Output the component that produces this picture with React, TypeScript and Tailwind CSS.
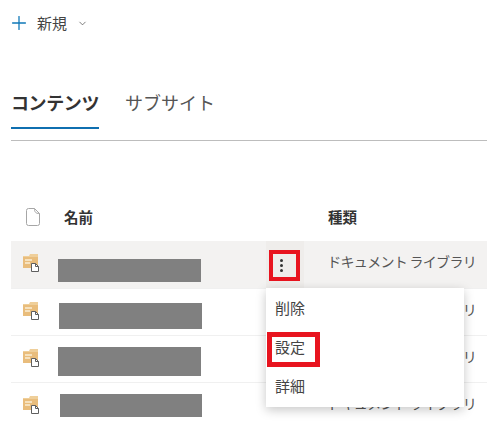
import { ChevronDown, Plus } from 'lucide-react';

const FONT = "font-['Noto_Sans_CJK_JP','Noto_Sans',sans-serif]";

// folder with a small page on top
function LibraryIcon() {
  return (
    <svg width="18" height="19" viewBox="0 0 18 19" className="shrink-0">
      <path d="M1 3h6l1-2h8v12H1z" fill="#efcf9a" />
      <path d="M1 4h15v11H1z" fill="#e9bd7c" />
      <path d="M3 6h7v2H3zM3 9h5v2H3z" fill="#f6e2bf" />
      <path d="M9.500 10.500h4l3 3v5h-7z" fill="#fff" stroke="#5f5f5f" strokeWidth="1" />
      <path d="M13.500 10.500v3h3" fill="none" stroke="#5f5f5f" strokeWidth="1" />
    </svg>
  );
}

function FileHeaderIcon() {
  return (
    <svg width="14" height="18" viewBox="0 0 14 18">
      <path
        d="M2.500.500h6l5 5v10a2 2 0 0 1-2 2h-9a2 2 0 0 1-2-2v-13a2 2 0 0 1 2-2z"
        fill="#fff"
        stroke="#a6a6a6"
      />
      <path d="M8.500.500c0 3.500 1 5 5 5" fill="none" stroke="#a6a6a6" />
    </svg>
  );
}

const rows = [
  { bar: 'ml-0 mt-[18px] h-[23px] w-[143px]' },
  { bar: 'ml-[1px] mt-[14px] h-[26px] w-[143px]' },
  { bar: 'ml-0 mt-[11px] h-[29px] w-[143px]' },
  { bar: 'ml-[2px] mt-[11px] h-[23px] w-[142px]' },
];

export default function App() {
  return (
    <div className={`relative h-[422px] w-[487px] overflow-hidden bg-white text-[#333] ${FONT}`}>
      {/* command bar */}
      <div className="flex h-[47px] items-center pl-[8px] text-[15px]">
        <Plus size={22} strokeWidth={1.4} className="-mt-[2px] text-[#0f78b8]" />
        <span className="ml-[7px] text-[#444]">新規</span>
        <ChevronDown size={11} strokeWidth={1.5} className="ml-[10px] text-[#444]" />
      </div>

      {/* tabs */}
      <div className="ml-[11px] mt-[39px] flex h-[55px] whitespace-nowrap border-b border-[#bdbdbd] text-[18px] leading-[32px]">
        <div className="h-[43px] w-[88px] border-b-[2px] border-[#0f6fb0] font-bold tracking-[-0.4px] text-[#333]">
          コンテンツ
        </div>
        <div className="ml-[26px] text-[#555]">サブサイト</div>
      </div>

      {/* table header */}
      <div className="mt-[55px] flex h-[45px] items-center pb-[3px] text-[14.5px] font-bold">
        <div className="ml-[26px] flex w-[38px]">
          <FileHeaderIcon />
        </div>
        <span className="w-[264px]">名前</span>
        <span>種類</span>
      </div>

      {/* table rows */}
      <div className="ml-[11px]">
        {rows.map((row, idx) => (
          <div
            key={idx}
            className={`flex border-b border-[#f0f0f0] ${idx === 0 ? 'h-[48px] bg-[#f3f2f1]' : 'h-[47px]'}`}
          >
            <div className="ml-[11px] mt-[12px] w-[36px] shrink-0">
              <LibraryIcon />
            </div>
            <div className={`bg-[#808080] ${row.bar}`} />
            <div className="ml-auto mr-[11px] mt-[10px] whitespace-nowrap text-[14px] leading-[20px] tracking-[-0.7px] text-[#555]">
              ドキュメント ライブラリ
            </div>
          </div>
        ))}
      </div>

      {/* more button */}
      <div className="absolute left-[266px] top-[241px] flex h-[48px] w-[38px] flex-col items-start justify-center gap-[2px] bg-[#efedeb] pl-[14px]">
        <span className="h-[3px] w-[3px] rounded-full bg-[#333]" />
        <span className="h-[3px] w-[3px] rounded-full bg-[#333]" />
        <span className="h-[3px] w-[3px] rounded-full bg-[#333]" />
      </div>
      <div className="absolute left-[269px] top-[250px] h-[31px] w-[31px] border-[4px] border-[#e8141f]" />

      {/* context menu */}
      <div className="absolute left-[266px] top-[288px] flex h-[119px] w-[198px] flex-col bg-white py-[1px] pl-[9px] text-[15px] text-[#444] shadow-[0_3px_10px_rgba(0,0,0,0.22)]">
        <div className="flex h-[39px] items-center">削除</div>
        <div className="flex h-[39px] items-center">設定</div>
        <div className="flex h-[39px] items-center">詳細</div>
      </div>
      <div className="absolute left-[267px] top-[332px] h-[35px] w-[53px] border-[5px] border-[#e8141f]" />
    </div>
  );
}
